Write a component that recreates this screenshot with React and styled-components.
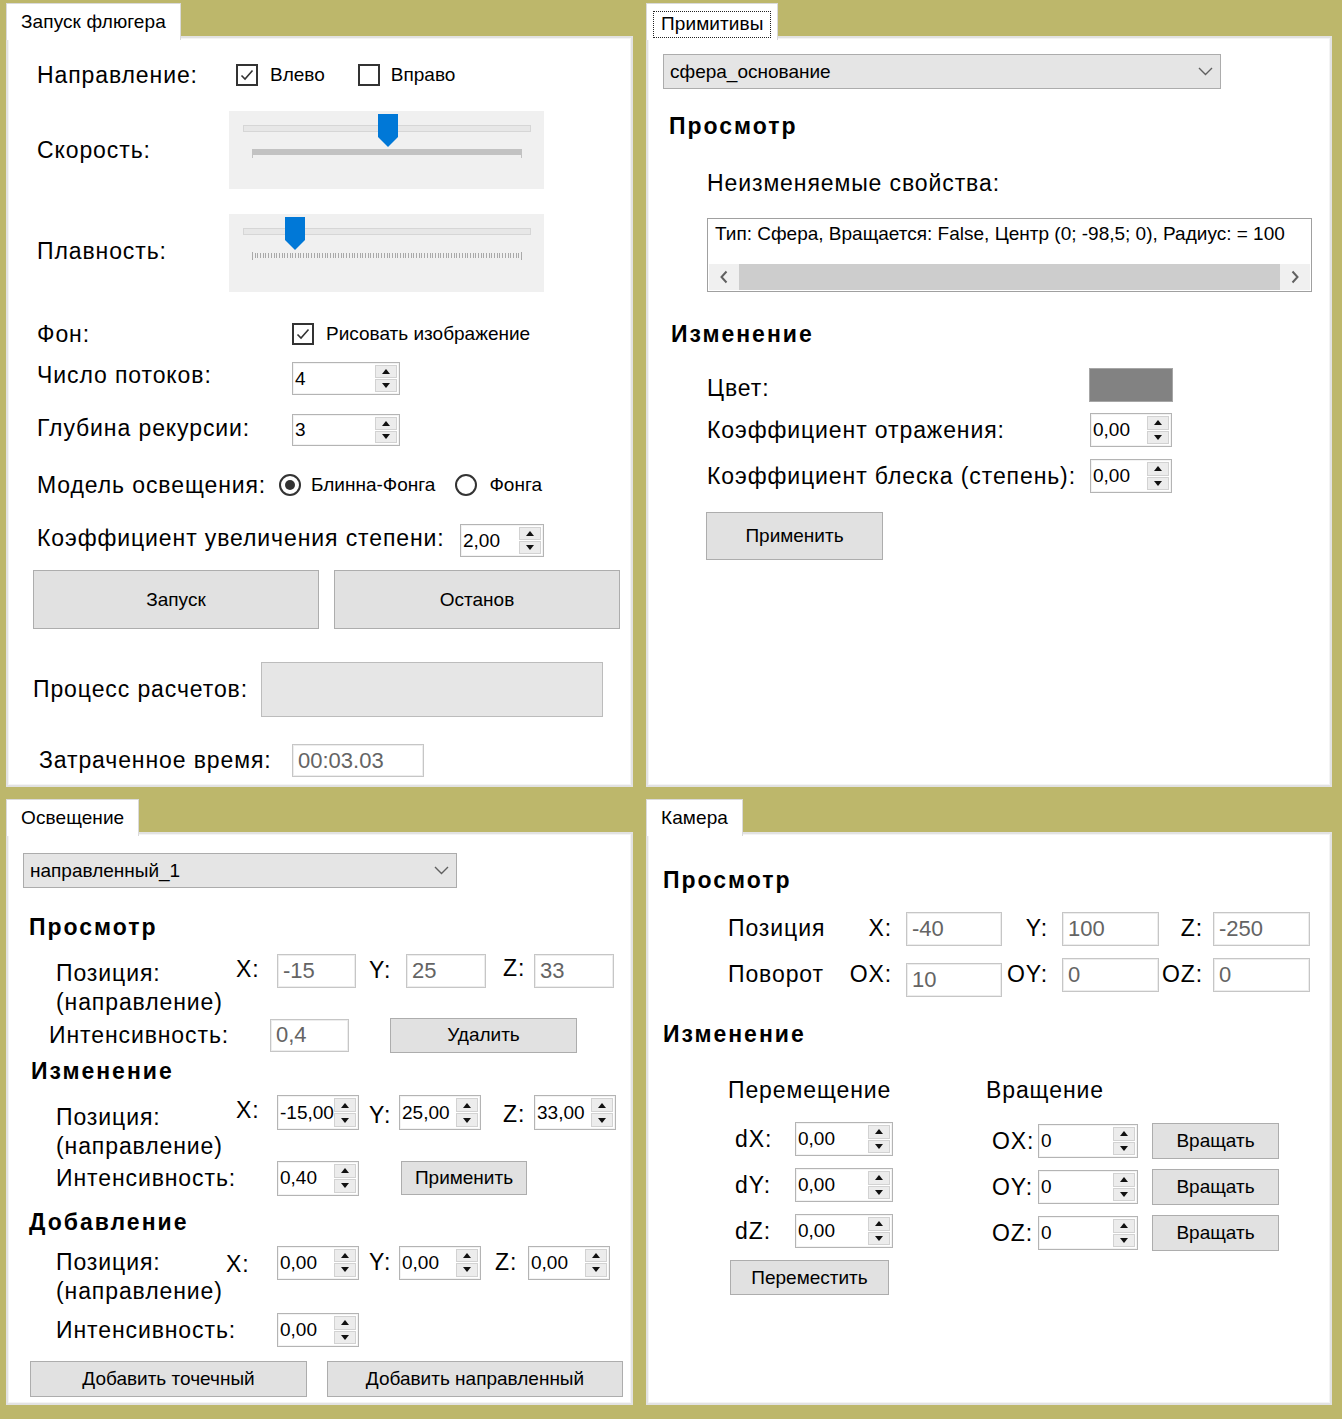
import React from 'react';
import styled, { createGlobalStyle, css } from 'styled-components';

const FONT = `"Liberation Sans", Arial, sans-serif`;

const GlobalStyle = createGlobalStyle`
  *, *::before, *::after { box-sizing: border-box; }
  html, body { margin: 0; padding: 0; background: #bdb76b; }
  body { font-family: ${FONT}; color: #000; }
`;

const Page = styled.main`
  width: 1342px;
  height: 1419px;
  background: #bdb76b;
  padding: 3px 0 0 6px;
  display: grid;
  grid-template-columns: 627px 686px;
  grid-template-rows: 784px 606px;
  column-gap: 13px;
  row-gap: 12px;
`;

const TabControl = styled.section`
  display: flex;
  flex-direction: column;
  min-width: 0;
`;

const TabStrip = styled.div`
  height: 35px;
  display: flex;
  align-items: flex-start;
  position: relative;
  z-index: 1;
  flex-shrink: 0;
`;

const Tab = styled.div`
  height: 37px;
  padding: 0 14px;
  background: #fff;
  border: 1px solid #dadada;
  border-bottom: none;
  display: flex;
  align-items: center;
  font-size: 19px;
  letter-spacing: 0.1px;
  white-space: nowrap;
`;

const TabFocus = styled.span`
  display: flex;
  align-items: center;
  height: 27px;
  margin: 4px -8px 0;
  padding: 0 7px;
  border: 1px dotted #222;
`;

const TabPage = styled.div`
  flex: 1;
  margin-top: -2px;
  background: #fff;
  border: 2px solid #e2e2e2;
  box-shadow: inset 0 0 0 1px #f4f4f4;
  display: flex;
  flex-direction: column;
  align-items: flex-start;
`;

const Row = styled.div`
  display: flex;
  align-items: ${(p) => p.$align || 'center'};
  ${(p) => p.$h && css`height: ${p.$h}px;`}
  margin-top: ${(p) => p.$mt || 0}px;
  padding-left: ${(p) => p.$pl || 0}px;
  gap: ${(p) => p.$gap || 0}px;
  flex-shrink: 0;
`;

const Label = styled.span`
  font-size: 23px;
  letter-spacing: 0.9px;
  line-height: 29px;
  white-space: nowrap;
  flex-shrink: 0;
  ${(p) => p.$w && css`width: ${p.$w}px;`}
  ${(p) => p.$ml && css`margin-left: ${p.$ml}px;`}
  ${(p) => p.$dy > 0 && css`margin-top: ${p.$dy * 2}px;`}
  ${(p) => p.$dy < 0 && css`margin-bottom: ${-p.$dy * 2}px;`}
`;

const BlockLabel = styled.div`
  font-size: 23px;
  letter-spacing: 0.9px;
  line-height: 29px;
  white-space: nowrap;
  flex-shrink: 0;
  margin-top: ${(p) => p.$mt || 0}px;
  margin-left: ${(p) => p.$ml || 0}px;
  ${(p) => p.$w && css`width: ${p.$w}px;`}
`;

const Axis = styled.span`
  font-size: 23px;
  letter-spacing: 0.9px;
  white-space: nowrap;
  justify-self: end;
  padding-right: ${(p) => p.$pr || 0}px;
`;

const Heading = styled.h3`
  margin: ${(p) => p.$mt || 0}px 0 0 ${(p) => p.$ml || 0}px;
  font-size: 23px;
  font-weight: 700;
  letter-spacing: 2px;
  line-height: 26px;
  white-space: nowrap;
`;

const Caption = styled.span`
  font-size: 19px;
  white-space: nowrap;
  margin-left: ${(p) => p.$ml || 0}px;
`;

const Choice = styled.span`
  display: inline-flex;
  align-items: center;
  gap: ${(p) => p.$gap || 11}px;
  margin-left: ${(p) => p.$ml || 0}px;
  flex-shrink: 0;
`;

const Box = styled.span`
  width: 22px;
  height: 22px;
  border: 2px solid #333;
  background: #fff;
  display: flex;
  align-items: center;
  justify-content: center;
  flex-shrink: 0;
`;

const Round = styled.span`
  width: 22px;
  height: 22px;
  border: 2px solid #333;
  border-radius: 50%;
  background: #fff;
  display: flex;
  align-items: center;
  justify-content: center;
  flex-shrink: 0;
  &::after {
    content: '';
    width: 10px;
    height: 10px;
    border-radius: 50%;
    background: ${(p) => (p.$on ? '#333' : 'transparent')};
  }
`;

const SpinBox = styled.span`
  width: ${(p) => p.$w}px;
  height: ${(p) => p.$h || 34}px;
  margin-left: ${(p) => p.$ml || 0}px;
  border: 1px solid #b4b4b4;
  box-shadow: inset 0 0 0 1px #f3f3f3;
  background: #fff;
  display: flex;
  flex-shrink: 0;
`;

const SpinValue = styled.span`
  flex: 1;
  min-width: 0;
  overflow: hidden;
  white-space: nowrap;
  font-size: 19px;
  padding-left: 2px;
  display: flex;
  align-items: center;
`;

const SpinButtons = styled.span`
  width: 24px;
  display: flex;
  flex-direction: column;
  gap: 1px;
  padding: 2px 2px 2px 0;
  flex-shrink: 0;
`;

const SpinArrow = styled.span`
  flex: 1;
  background: #ececec;
  border: 1px solid #d2d2d2;
  display: flex;
  align-items: center;
  justify-content: center;
  &::after {
    content: '';
    border-left: 4px solid transparent;
    border-right: 4px solid transparent;
    ${(p) =>
      p.$down
        ? css`border-top: 5px solid #111;`
        : css`border-bottom: 5px solid #111;`}
  }
`;

const ReadBox = styled.span`
  width: ${(p) => p.$w}px;
  height: ${(p) => p.$h || 34}px;
  margin-left: ${(p) => p.$ml || 0}px;
  ${(p) => p.$mt && css`margin-top: ${p.$mt}px; margin-bottom: ${-p.$mt}px;`}
  flex-shrink: 0;
  border: 1px solid #c6c6c6;
  box-shadow: inset 0 0 0 1px #ededed;
  background: #fff;
  color: #646464;
  font-size: 22px;
  padding-left: 5px;
  display: flex;
  align-items: center;
  white-space: nowrap;
`;

const Button = styled.button`
  width: ${(p) => p.$w}px;
  height: ${(p) => p.$h}px;
  margin: ${(p) => p.$mt || 0}px 0 0 ${(p) => p.$ml || 0}px;
  background: #e1e1e1;
  border: 1px solid #adadad;
  font-family: ${FONT};
  font-size: 19px;
  color: #000;
  padding: 0;
  flex-shrink: 0;
`;

const Combo = styled.div`
  width: ${(p) => p.$w}px;
  height: 35px;
  margin: ${(p) => p.$mt || 0}px 0 0 ${(p) => p.$ml || 0}px;
  background: #e5e5e5;
  border: 1px solid #acacac;
  display: flex;
  align-items: center;
  justify-content: space-between;
  padding: 0 7px 0 6px;
  font-size: 19px;
  flex-shrink: 0;
`;

const TrackBox = styled.span`
  width: 315px;
  height: 78px;
  background: #f0f0f0;
  display: block;
  flex-shrink: 0;
`;

const Progress = styled.span`
  width: ${(p) => p.$w}px;
  height: ${(p) => p.$h}px;
  background: #e6e6e6;
  border: 1px solid #bcbcbc;
  flex-shrink: 0;
`;

const Swatch = styled.span`
  width: 84px;
  height: 34px;
  background: #828282;
  border: 1px solid #a6a6a6;
  flex-shrink: 0;
`;

const TextArea = styled.div`
  width: 605px;
  height: 74px;
  margin: 20px 0 0 59px;
  border: 1px solid #a0a0a0;
  padding: 1px;
  display: flex;
  flex-direction: column;
  background: #fff;
  flex-shrink: 0;
`;

const TextLine = styled.div`
  flex: 1;
  font-size: 19px;
  line-height: 24px;
  padding: 2px 0 0 6px;
  white-space: nowrap;
  overflow: hidden;
`;

const HScroll = styled.div`
  height: 26px;
  background: #f0f0f0;
  display: flex;
`;

const ScrollBtn = styled.span`
  width: 30px;
  display: flex;
  align-items: center;
  justify-content: center;
`;

const ScrollThumb = styled.span`
  flex: 1;
  background: #cdcdcd;
`;

const Fields = styled.div`
  display: flex;
  align-items: center;
  height: 35px;
`;

const CoordGrid = styled.div`
  display: grid;
  grid-template-columns: 126px 52px 96px 60px 97px 54px 97px;
  grid-auto-rows: 35px;
  row-gap: 11px;
  align-items: center;
  margin: ${(p) => p.$mt || 0}px 0 0 ${(p) => p.$ml || 0}px;
`;

const Columns = styled.div`
  display: flex;
  margin: ${(p) => p.$mt || 0}px 0 0 ${(p) => p.$ml || 0}px;
`;

const Column = styled.div`
  display: flex;
  flex-direction: column;
  align-items: flex-start;
  width: ${(p) => (p.$w ? `${p.$w}px` : 'auto')};
`;

const Check = ({ checked }) => (
  <Box>
    {checked && (
      <svg width="16" height="16" viewBox="0 0 16 16">
        <path d="M2.5 8.5 L6 12 L13.5 3.5" fill="none" stroke="#333" strokeWidth="1.6" />
      </svg>
    )}
  </Box>
);

const Spin = ({ w, h, value, ml }) => (
  <SpinBox $w={w} $h={h} $ml={ml}>
    <SpinValue>{value}</SpinValue>
    <SpinButtons>
      <SpinArrow />
      <SpinArrow $down />
    </SpinButtons>
  </SpinBox>
);

const Chevron = () => (
  <svg width="15" height="9" viewBox="0 0 15 9">
    <path d="M1 1 L7.5 7.5 L14 1" fill="none" stroke="#606060" strokeWidth="1.4" />
  </svg>
);

const ticks2 = Array.from({ length: 101 }, (_, i) => 23 + Math.round(i * 2.69));

const TrackBar = ({ thumb, dense }) => (
  <TrackBox>
    <svg width="315" height="78" viewBox="0 0 315 78">
      <rect x="14.5" y="14.5" width="287" height="6" fill="#e7e7e7" stroke="#d6d6d6" />
      {dense ? (
        <g fill="#c2c2c2">
          <rect x="23" y="38" width="270" height="6" />
          <rect x="23" y="38" width="1" height="9" />
          <rect x="292" y="38" width="1" height="9" />
        </g>
      ) : (
        <g fill="#a9a9a9">
          {ticks2.map((x, i) => (
            <rect key={i} x={x} y={i === 0 || i === 100 ? 38 : 39} width="1" height={i === 0 || i === 100 ? 8 : 5} />
          ))}
        </g>
      )}
      <path d={`M${thumb} 3 h20 v23 l-10 10 l-10 -10 z`} fill="#0078d7" />
    </svg>
  </TrackBox>
);

const FlugerPanel = () => (
  <TabControl>
    <TabStrip>
      <Tab>Запуск флюгера</Tab>
    </TabStrip>
    <TabPage>
      <Row $mt={22} $pl={29} $h={30}>
        <Label $w={199}>Направление:</Label>
        <Choice $gap={12}>
          <Check checked />
          <Caption>Влево</Caption>
        </Choice>
        <Choice $gap={11} $ml={33}>
          <Check />
          <Caption>Вправо</Caption>
        </Choice>
      </Row>
      <Row $mt={21} $pl={29} $h={78}>
        <Label $w={192}>Скорость:</Label>
        <TrackBar thumb={149} dense />
      </Row>
      <Row $mt={25} $pl={29} $h={78}>
        <Label $w={192} $dy={-2}>Плавность:</Label>
        <TrackBar thumb={56} />
      </Row>
      <Row $mt={30} $pl={29} $h={24}>
        <Label $w={255}>Фон:</Label>
        <Choice $gap={12}>
          <Check checked />
          <Caption>Рисовать изображение</Caption>
        </Choice>
      </Row>
      <Row $mt={16} $pl={29} $h={33}>
        <Label $w={255} $dy={-3}>Число потоков:</Label>
        <Spin w={108} h={33} value="4" />
      </Row>
      <Row $mt={19} $pl={29} $h={32}>
        <Label $w={255} $dy={-2}>Глубина рекурсии:</Label>
        <Spin w={108} h={32} value="3" />
      </Row>
      <Row $mt={27} $pl={29} $h={24}>
        <Label $w={242}>Модель освещения:</Label>
        <Choice $gap={10}>
          <Round $on />
          <Caption>Блинна-Фонга</Caption>
        </Choice>
        <Choice $gap={12} $ml={20}>
          <Round />
          <Caption>Фонга</Caption>
        </Choice>
      </Row>
      <Row $mt={27} $pl={29} $h={33}>
        <Label $w={423} $dy={-2}>Коэффициент увеличения степени:</Label>
        <Spin w={84} h={33} value="2,00" />
      </Row>
      <Row $mt={13} $pl={25} $h={59} $gap={15}>
        <Button $w={286} $h={59}>Запуск</Button>
        <Button $w={286} $h={59}>Останов</Button>
      </Row>
      <Row $mt={33} $pl={25} $h={55}>
        <Label $w={228}>Процесс расчетов:</Label>
        <Progress $w={342} $h={55} />
      </Row>
      <Row $mt={27} $pl={31} $h={33}>
        <Label $w={253}>Затраченное время:</Label>
        <ReadBox $w={132} $h={33}>00:03.03</ReadBox>
      </Row>
    </TabPage>
  </TabControl>
);

const PrimitivesPanel = () => (
  <TabControl>
    <TabStrip>
      <Tab>
        <TabFocus>Примитивы</TabFocus>
      </Tab>
    </TabStrip>
    <TabPage>
      <Combo $w={558} $mt={16} $ml={15}>
        <span>сфера_основание</span>
        <Chevron />
      </Combo>
      <Heading $mt={24} $ml={21}>Просмотр</Heading>
      <BlockLabel $mt={30} $ml={59}>Неизменяемые свойства:</BlockLabel>
      <TextArea>
        <TextLine>Тип: Сфера, Вращается: False, Центр (0; -98,5; 0), Радиус: = 100</TextLine>
        <HScroll>
          <ScrollBtn>
            <svg width="10" height="14" viewBox="0 0 10 14">
              <path d="M7.5 1.5 L2.5 7 L7.5 12.5" fill="none" stroke="#606060" strokeWidth="2" />
            </svg>
          </ScrollBtn>
          <ScrollThumb />
          <ScrollBtn>
            <svg width="10" height="14" viewBox="0 0 10 14">
              <path d="M2.5 1.5 L7.5 7 L2.5 12.5" fill="none" stroke="#606060" strokeWidth="2" />
            </svg>
          </ScrollBtn>
        </HScroll>
      </TextArea>
      <Heading $mt={29} $ml={23}>Изменение</Heading>
      <Row $mt={21} $pl={59} $h={34}>
        <Label $w={382} $dy={3}>Цвет:</Label>
        <Swatch />
      </Row>
      <Row $mt={11} $pl={59} $h={34}>
        <Label $w={383}>Коэффициент отражения:</Label>
        <Spin w={82} h={34} value="0,00" />
      </Row>
      <Row $mt={12} $pl={59} $h={34}>
        <Label $w={383}>Коэффициент блеска (степень):</Label>
        <Spin w={82} h={34} value="0,00" />
      </Row>
      <Button $w={177} $h={48} $mt={19} $ml={58}>Применить</Button>
    </TabPage>
  </TabControl>
);

const LightPanel = () => (
  <TabControl>
    <TabStrip>
      <Tab>Освещение</Tab>
    </TabStrip>
    <TabPage>
      <Combo $w={434} $mt={19} $ml={15}>
        <span>направленный_1</span>
        <Chevron />
      </Combo>
      <Heading $mt={26} $ml={21}>Просмотр</Heading>
      <Row $mt={13} $pl={48} $align="flex-start">
        <BlockLabel $w={180} $mt={6}>
          Позиция:
          <br />
          (направление)
        </BlockLabel>
        <Fields>
          <Label $w={41} $dy={-1}>X:</Label>
          <ReadBox $w={79}>-15</ReadBox>
          <Label $w={37} $ml={13}>Y:</Label>
          <ReadBox $w={80}>25</ReadBox>
          <Label $w={31} $ml={17} $dy={-2}>Z:</Label>
          <ReadBox $w={80}>33</ReadBox>
        </Fields>
      </Row>
      <Row $h={36} $pl={41}>
        <Label $w={221}>Интенсивность:</Label>
        <ReadBox $w={79} $h={33}>0,4</ReadBox>
        <Button $w={187} $h={35} $ml={41}>Удалить</Button>
      </Row>
      <Heading $mt={5} $ml={23}>Изменение</Heading>
      <Row $mt={11} $pl={48} $align="flex-start">
        <BlockLabel $w={180} $mt={8}>
          Позиция:
          <br />
          (направление)
        </BlockLabel>
        <Fields>
          <Label $w={41} $dy={-2}>X:</Label>
          <Spin w={82} h={35} value="-15,00" />
          <Label $w={30} $ml={10} $dy={3}>Y:</Label>
          <Spin w={82} h={35} value="25,00" />
          <Label $w={31} $ml={22} $dy={2}>Z:</Label>
          <Spin w={82} h={35} value="33,00" />
        </Fields>
      </Row>
      <Row $mt={-2} $h={38} $pl={48}>
        <Label $w={221}>Интенсивность:</Label>
        <Spin w={82} h={35} value="0,40" />
        <Button $w={126} $h={34} $ml={42}>Применить</Button>
      </Row>
      <Heading $mt={12} $ml={21}>Добавление</Heading>
      <Row $mt={10} $pl={48} $align="flex-start">
        <BlockLabel $w={170} $mt={3}>
          Позиция:
          <br />
          (направление)
        </BlockLabel>
        <Fields>
          <Label $w={51} $dy={2}>X:</Label>
          <Spin w={82} h={34} value="0,00" />
          <Label $w={30} $ml={10}>Y:</Label>
          <Spin w={82} h={34} value="0,00" />
          <Label $w={33} $ml={14}>Z:</Label>
          <Spin w={82} h={34} value="0,00" />
        </Fields>
      </Row>
      <Row $mt={7} $h={34} $pl={48}>
        <Label $w={221}>Интенсивность:</Label>
        <Spin w={82} h={34} value="0,00" />
      </Row>
      <Row $mt={14} $pl={22} $h={36} $gap={20}>
        <Button $w={277} $h={36}>Добавить точечный</Button>
        <Button $w={296} $h={36}>Добавить направленный</Button>
      </Row>
    </TabPage>
  </TabControl>
);

const CameraPanel = () => (
  <TabControl>
    <TabStrip>
      <Tab>Камера</Tab>
    </TabStrip>
    <TabPage>
      <Heading $mt={33} $ml={15}>Просмотр</Heading>
      <CoordGrid $mt={18} $ml={80}>
        <Label>Позиция</Label>
        <Axis $pr={14}>X:</Axis>
        <ReadBox $w={96}>-40</ReadBox>
        <Axis $pr={14}>Y:</Axis>
        <ReadBox $w={97}>100</ReadBox>
        <Axis $pr={10}>Z:</Axis>
        <ReadBox $w={97}>-250</ReadBox>
        <Label>Поворот</Label>
        <Axis $pr={14}>OX:</Axis>
        <ReadBox $w={96} $mt={5}>10</ReadBox>
        <Axis $pr={14}>OY:</Axis>
        <ReadBox $w={97}>0</ReadBox>
        <Axis $pr={10}>OZ:</Axis>
        <ReadBox $w={97}>0</ReadBox>
      </CoordGrid>
      <Heading $mt={29} $ml={15}>Изменение</Heading>
      <Columns $mt={29} $ml={80}>
        <Column $w={258}>
          <BlockLabel>Перемещение</BlockLabel>
          <Row $mt={17} $pl={7} $h={34}>
            <Label $w={60}>dX:</Label>
            <Spin w={98} h={34} value="0,00" />
          </Row>
          <Row $mt={12} $pl={7} $h={34}>
            <Label $w={60}>dY:</Label>
            <Spin w={98} h={34} value="0,00" />
          </Row>
          <Row $mt={12} $pl={7} $h={34}>
            <Label $w={60}>dZ:</Label>
            <Spin w={98} h={34} value="0,00" />
          </Row>
          <Button $w={159} $h={35} $mt={12} $ml={2}>Переместить</Button>
        </Column>
        <Column>
          <BlockLabel>Вращение</BlockLabel>
          <Row $mt={18} $pl={6} $h={36}>
            <Label $w={46}>OX:</Label>
            <Spin w={100} h={34} value="0" />
            <Button $w={127} $h={36} $ml={14}>Вращать</Button>
          </Row>
          <Row $mt={10} $pl={6} $h={36}>
            <Label $w={46}>OY:</Label>
            <Spin w={100} h={34} value="0" />
            <Button $w={127} $h={36} $ml={14}>Вращать</Button>
          </Row>
          <Row $mt={10} $pl={6} $h={36}>
            <Label $w={46}>OZ:</Label>
            <Spin w={100} h={34} value="0" />
            <Button $w={127} $h={36} $ml={14}>Вращать</Button>
          </Row>
        </Column>
      </Columns>
    </TabPage>
  </TabControl>
);

export default function App() {
  return (
    <>
      <GlobalStyle />
      <Page>
        <FlugerPanel />
        <PrimitivesPanel />
        <LightPanel />
        <CameraPanel />
      </Page>
    </>
  );
}
